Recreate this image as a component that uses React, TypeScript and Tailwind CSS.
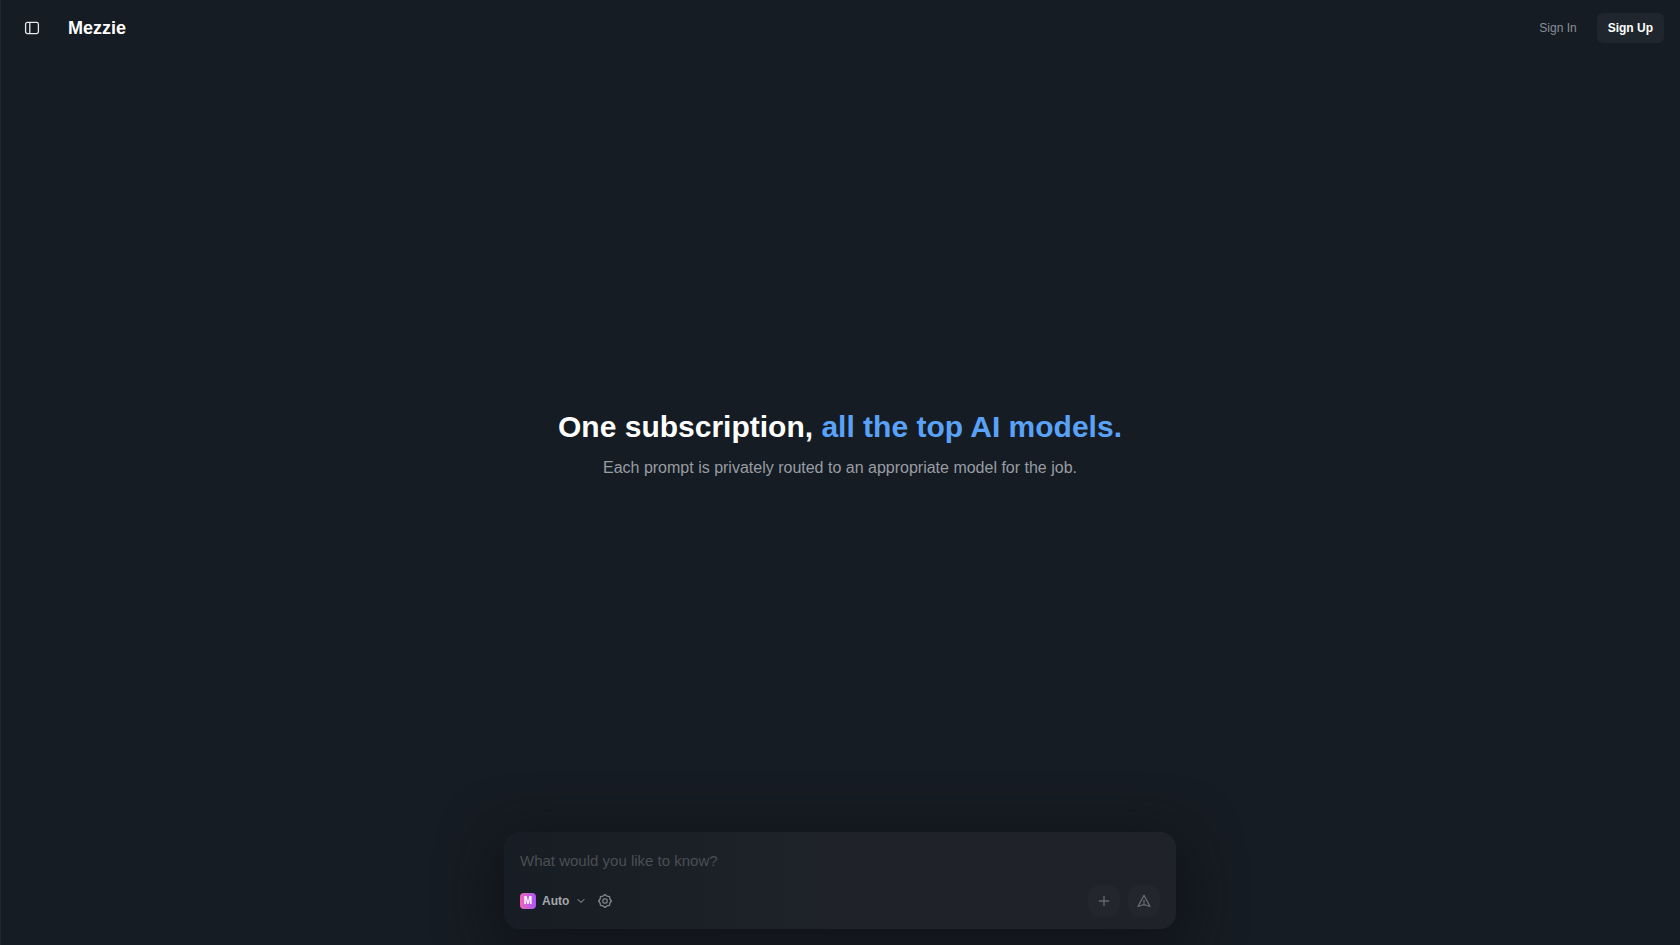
import { useState } from 'react'
import { ChevronDown, Plus } from 'lucide-react'

function SidebarIcon() {
  return (
    <svg className="size-4" viewBox="0 0 16 16" fill="none" stroke="currentColor" strokeWidth={1.3}>
      <rect x="1.6" y="2.4" width="12.8" height="11.2" rx="1.8" />
      <path d="M5.8 2.4v11.2" />
    </svg>
  )
}

function GearIcon() {
  return (
    <svg className="size-4" viewBox="0 0 24 24" fill="none" stroke="currentColor" strokeWidth={2} strokeLinejoin="round">
      <path d="M12 2.5 15 4.6 18.7 5.3 19.4 9 21.5 12 19.4 15 18.7 18.7 15 19.4 12 21.5 9 19.4 5.3 18.7 4.6 15 2.5 12 4.6 9 5.3 5.3 9 4.6Z" />
      <rect x="8.8" y="8.8" width="6.4" height="6.4" rx="2.4" />
    </svg>
  )
}

function SendIcon() {
  return (
    <svg className="size-4" viewBox="0 0 24 24" fill="none" stroke="currentColor" strokeWidth={2} strokeLinejoin="round" strokeLinecap="round">
      <path d="M12 3.5 21 20 12 17.5 3 20Z" />
      <path d="M12 11v6.5" />
    </svg>
  )
}

function Header() {
  return (
    <header className="flex h-14 items-center justify-between px-4">
      <div className="flex items-center gap-5">
        <button type="button" aria-label="Toggle sidebar" className="p-2 text-gray-200">
          <SidebarIcon />
        </button>
        <a href="#" className="text-lg font-bold text-white">Mezzie</a>
      </div>
      <nav className="flex items-center gap-5 text-xs">
        <a href="#" className="text-[#8b9098]">Sign In</a>
        <button type="button" className="h-[30px] rounded-md bg-[#20262d] px-[11px] font-bold text-white">
          Sign Up
        </button>
      </nav>
    </header>
  )
}

function Composer() {
  const [prompt, setPrompt] = useState('')

  return (
    <form
      onSubmit={(e) => e.preventDefault()}
      className="mx-auto w-full max-w-2xl rounded-2xl bg-linear-to-r from-[#171d24] via-[#1f2229] to-[#1f2328] px-4 pt-4 pb-3 shadow-[0_14px_56px_8px_rgba(16,16,20,0.75)]"
    >
      <input
        type="text"
        aria-label="Prompt"
        value={prompt}
        onChange={(e) => setPrompt(e.target.value)}
        placeholder="What would you like to know?"
        className="mb-[13px] block h-6 w-full bg-transparent text-[15px] text-gray-200 outline-none placeholder:text-[#4b4e52]"
      />
      <div className="flex items-center justify-between">
        <div className="flex items-center gap-2.5">
          <button type="button" className="flex items-center gap-1.5 text-xs font-bold text-[#a5a7aa]">
            <span className="flex size-4 items-center justify-center rounded-sm bg-linear-to-r from-[#f062b4] to-[#a855f7] text-[10px] text-white">
              M
            </span>
            Auto
            <ChevronDown className="size-3" />
          </button>
          <button type="button" aria-label="Settings" className="text-[#83878c]">
            <GearIcon />
          </button>
        </div>
        <div className="flex gap-2 text-[#64686d]">
          <button type="button" aria-label="Add attachment" className="flex size-8 items-center justify-center rounded-xl bg-[#23272d]">
            <Plus className="size-4" strokeWidth={2} />
          </button>
          <button type="submit" aria-label="Send" className="flex size-8 items-center justify-center rounded-xl bg-[#23272d]">
            <SendIcon />
          </button>
        </div>
      </div>
    </form>
  )
}

export default function App() {
  return (
    <div className="flex min-h-screen flex-col overflow-hidden bg-[#161c23] font-['Liberation_Sans',Arial,sans-serif] shadow-[inset_1px_0_0_#20272e]">
      <Header />
      <main className="flex flex-1 flex-col">
        <div className="flex flex-1 flex-col items-center justify-center text-center">
          <h1 className="text-3xl font-bold text-white">
            One subscription, <span className="text-[#5aa2f8]">all the top AI models.</span>
          </h1>
          <p className="mt-[11px] text-base text-[#989ca3]">
            Each prompt is privately routed to an appropriate model for the job.
          </p>
        </div>
        <div className="px-4 pb-4">
          <Composer />
        </div>
      </main>
    </div>
  )
}
